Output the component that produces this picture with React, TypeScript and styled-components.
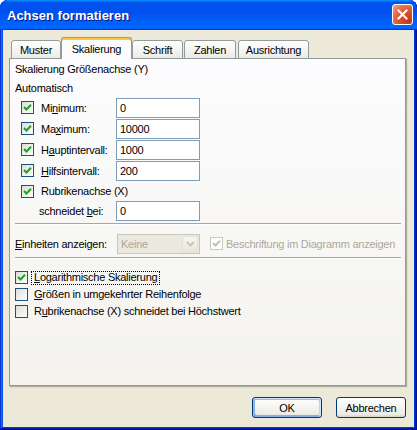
import React from 'react';
import styled, { createGlobalStyle } from 'styled-components';

const Global = createGlobalStyle`
  html, body { margin: 0; padding: 0; background: #ffffff; }
  body {
    font-family: "Liberation Sans", Arial, sans-serif;
    font-size: 11px;
    letter-spacing: -0.25px;
    color: #000;
  }
  u { text-decoration-thickness: 1px; text-underline-offset: 1px; }
`;

const Window = styled.div`
  width: 417px;
  height: 430px;
  box-sizing: border-box;
  display: flex;
  flex-direction: column;
  padding: 0 3px 3px;
  background: #0831d9;
  box-shadow: inset -1px -1px #00138c, inset 1px 1px #0831d9,
    inset -2px -2px #001ea0, inset 2px 2px #166aee, inset -3px -3px #003bda,
    inset 3px 3px #0855dd;
  border-radius: 8px 8px 0 0;
  overflow: hidden;
`;

const TitleBar = styled.div`
  height: 30px;
  margin: 0 -3px;
  flex: none;
  display: flex;
  align-items: center;
  justify-content: space-between;
  padding: 0 4px 0 7px;
  box-sizing: border-box;
  border-radius: 8px 8px 0 0;
  background: linear-gradient(
    180deg,
    #0997ff 0%,
    #0053ee 8%,
    #0050ee 40%,
    #0066ff 88%,
    #0066ff 93%,
    #005bff 95%,
    #003dd7 96%,
    #003dd7 100%
  );
`;

const TitleText = styled.span`
  font-family: "Liberation Sans", Arial, sans-serif;
  font-weight: bold;
  font-size: 13px;
  letter-spacing: 0;
  color: #ffffff;
  text-shadow: 1px 1px #0f1089;
  padding-top: 1px;
`;

const CloseButton = styled.div`
  width: 21px;
  height: 21px;
  box-sizing: border-box;
  border: 1px solid #ffffff;
  border-radius: 3px;
  display: flex;
  align-items: center;
  justify-content: center;
  background: radial-gradient(
    circle at 85% 85%,
    #c4391a 0%,
    #d9542c 45%,
    #e37150 70%,
    #f3a68c 100%
  );
  margin-top: -1px;
`;

const Client = styled.div`
  flex: 1;
  display: flex;
  flex-direction: column;
  background: #ece9d8;
  padding: 0 8px 0 6px;
`;

const TabStrip = styled.div`
  display: flex;
  align-items: flex-end;
  height: 22px;
  margin-top: 7px;
  padding-left: 2px;
  position: relative;
  z-index: 2;
  margin-bottom: -1px;
`;

const Tab = styled.div<{ $w: number; $ml?: number; $active?: boolean }>`
  width: ${(p) => p.$w}px;
  margin-left: ${(p) => p.$ml ?? 0}px;
  height: ${(p) => (p.$active ? 22 : 19)}px;
  box-sizing: border-box;
  display: flex;
  align-items: center;
  justify-content: center;
  border: 1px solid #919b9c;
  border-bottom: ${(p) => (p.$active ? 'none' : '1px solid #919b9c')};
  border-radius: 3px 3px 0 0;
  background: ${(p) =>
    p.$active
      ? '#fcfcfe'
      : 'linear-gradient(180deg, #ffffff 0%, #f7f7f4 40%, #ecebe5 100%)'};
  box-shadow: ${(p) =>
    p.$active ? 'inset 0 2px #ffc73c, inset 0 1px #e68b2c' : 'none'};
  padding-top: ${(p) => (p.$active ? 1 : 0)}px;
  position: relative;
  z-index: ${(p) => (p.$active ? 3 : 1)};
`;

const Panel = styled.div`
  height: 328px;
  box-sizing: border-box;
  display: flex;
  flex-direction: column;
  border: 1px solid #919b9c;
  background: linear-gradient(180deg, #fcfcfe 0%, #f4f3ee 100%);
  box-shadow: 1px 1px 1px 0 rgba(160, 158, 140, 0.8);
  padding: 0 4px 0 5px;
  position: relative;
  z-index: 1;
`;

const Row = styled.div<{ $h: number; $mt?: number }>`
  height: ${(p) => p.$h}px;
  margin-top: ${(p) => p.$mt ?? 0}px;
  display: flex;
  align-items: center;
  flex: none;
`;

const Label = styled.span<{ $w?: number; $ml?: number; $disabled?: boolean }>`
  width: ${(p) => (p.$w ? `${p.$w}px` : 'auto')};
  margin-left: ${(p) => p.$ml ?? 0}px;
  color: ${(p) => (p.$disabled ? '#aca899' : '#000')};
  white-space: nowrap;
  flex: none;
`;

const TextInput = styled.div`
  width: 84px;
  height: 20px;
  box-sizing: border-box;
  border: 1px solid #7f9db9;
  background: #ffffff;
  display: flex;
  align-items: center;
  padding-left: 3px;
  flex: none;
`;

const Separator = styled.div<{ $mt: number }>`
  margin-top: ${(p) => p.$mt}px;
  height: 0;
  border-top: 1px solid #aca899;
  border-bottom: 1px solid #ffffff;
  margin-right: 0;
  flex: none;
`;

const Select = styled.div`
  width: 83px;
  height: 20px;
  box-sizing: border-box;
  border: 1px solid #c9c7ba;
  background: #ebe9df;
  display: flex;
  align-items: stretch;
  flex: none;
`;

const SelectText = styled.span`
  flex: 1;
  display: flex;
  align-items: center;
  padding-left: 3px;
  color: #aca899;
`;

const SelectButton = styled.span`
  width: 16px;
  margin: 1px;
  box-sizing: border-box;
  border: 1px solid #e4e2d8;
  border-radius: 2px;
  background: linear-gradient(180deg, #f7f6f1 0%, #e8e6dc 100%);
  display: flex;
  align-items: center;
  justify-content: center;
`;

const Box = styled.span<{ $disabled?: boolean; $ml?: number }>`
  width: 13px;
  height: 13px;
  box-sizing: border-box;
  margin-left: ${(p) => p.$ml ?? 0}px;
  border: 1px solid ${(p) => (p.$disabled ? '#cac8bb' : '#1c5180')};
  background: ${(p) =>
    p.$disabled ? '#ffffff' : 'linear-gradient(135deg, #dcdcd7 0%, #ffffff 100%)'};
  display: flex;
  align-items: center;
  justify-content: center;
  flex: none;
`;

const CheckLabel = styled.span<{ $focus?: boolean }>`
  margin-left: 3px;
  padding: 0 2px 1px 2px;
  border: 1px ${(p) => (p.$focus ? 'dotted #000' : 'solid transparent')};
  white-space: nowrap;
  line-height: 11px;
`;

const ButtonRow = styled.div`
  display: flex;
  justify-content: flex-end;
  gap: 14px;
  margin-top: 11px;
`;

const Button = styled.div<{ $default?: boolean }>`
  width: 70px;
  height: 21px;
  box-sizing: border-box;
  border: 1px solid #003c74;
  border-radius: 3px;
  background: linear-gradient(180deg, #ffffff 0%, #ecebe6 86%, #d6d0c5 100%);
  display: flex;
  align-items: center;
  justify-content: center;
  box-shadow: ${(p) =>
    p.$default
      ? 'inset -1px 1px #cee7ff, inset 1px 2px #98b8ea, inset -2px 2px #bcd4f6, inset 1px -1px #89ade4, inset 2px -2px #89ade4'
      : 'none'};
`;

const Check = ({ disabled }: { disabled?: boolean }) => (
  <svg width="11" height="11" viewBox="0 0 11 11">
    <polyline
      points="2,5 4.5,7.5 9,2.8"
      fill="none"
      stroke={disabled ? '#c2c0b2' : '#21a121'}
      strokeWidth="2"
    />
  </svg>
);

const CheckBox = ({
  checked,
  disabled,
  ml,
}: {
  checked?: boolean;
  disabled?: boolean;
  ml?: number;
}) => (
  <Box $disabled={disabled} $ml={ml}>
    {checked && <Check disabled={disabled} />}
  </Box>
);

const FieldRow = ({ label, value }: { label: React.ReactNode; value: string }) => (
  <Row $h={21}>
    <CheckBox checked ml={6} />
    <Label $w={75} $ml={7}>
      {label}
    </Label>
    <TextInput>{value}</TextInput>
  </Row>
);

export default function App() {
  return (
    <>
      <Global />
      <Window>
        <TitleBar>
          <TitleText>Achsen formatieren</TitleText>
          <CloseButton>
            <svg width="11" height="11" viewBox="0 0 11 11">
              <path
                d="M1.5 1.5 L9.5 9.5 M9.5 1.5 L1.5 9.5"
                stroke="#ffffff"
                strokeWidth="2"
                strokeLinecap="square"
              />
            </svg>
          </CloseButton>
        </TitleBar>
        <Client>
          <TabStrip>
            <Tab $w={50}>Muster</Tab>
            <Tab $w={71} $active>
              Skalierung
            </Tab>
            <Tab $w={51}>Schrift</Tab>
            <Tab $w={52} $ml={1}>
              Zahlen
            </Tab>
            <Tab $w={71} $ml={2}>
              Ausrichtung
            </Tab>
          </TabStrip>
          <Panel>
            <Row $h={20}>
              <Label>Skalierung Größenachse (Y)</Label>
            </Row>
            <Row $h={18}>
              <Label>Automatisch</Label>
            </Row>
            <FieldRow
              label={
                <>
                  Mi<u>n</u>imum:
                </>
              }
              value="0"
            />
            <FieldRow
              label={
                <>
                  Ma<u>x</u>imum:
                </>
              }
              value="10000"
            />
            <FieldRow
              label={
                <>
                  H<u>a</u>uptintervall:
                </>
              }
              value="1000"
            />
            <FieldRow
              label={
                <>
                  <u>H</u>ilfsintervall:
                </>
              }
              value="200"
            />
            <Row $h={20}>
              <CheckBox checked ml={6} />
              <Label $ml={7}>Rubrikenachse (X)</Label>
            </Row>
            <Row $h={20}>
              <Label $w={77} $ml={24}>
                schneidet <u>b</u>ei:
              </Label>
              <TextInput>0</TextInput>
            </Row>
            <Separator $mt={2} />
            <Row $h={21} $mt={8}>
              <Label $w={102}>
                <u>E</u>inheiten anzeigen:
              </Label>
              <Select>
                <SelectText>Keine</SelectText>
                <SelectButton>
                  <svg width="9" height="6" viewBox="0 0 9 6">
                    <polyline
                      points="1,1 4.5,4.5 8,1"
                      fill="none"
                      stroke="#c9c7ba"
                      strokeWidth="2"
                    />
                  </svg>
                </SelectButton>
              </Select>
              <CheckBox checked disabled ml={10} />
              <Label $ml={3} $disabled>
                Beschriftung im Diagramm anzeigen
              </Label>
            </Row>
            <Separator $mt={3} />
            <Row $h={17} $mt={10}>
              <CheckBox checked />
              <CheckLabel $focus>
                <u>L</u>ogarithmische Skalierung
              </CheckLabel>
            </Row>
            <Row $h={17}>
              <CheckBox />
              <CheckLabel>
                <u>G</u>rößen in umgekehrter Reihenfolge
              </CheckLabel>
            </Row>
            <Row $h={17}>
              <CheckBox />
              <CheckLabel>
                R<u>u</u>brikenachse (X) schneidet bei Höchstwert
              </CheckLabel>
            </Row>
          </Panel>
          <ButtonRow>
            <Button $default>OK</Button>
            <Button>Abbrechen</Button>
          </ButtonRow>
        </Client>
      </Window>
    </>
  );
}
